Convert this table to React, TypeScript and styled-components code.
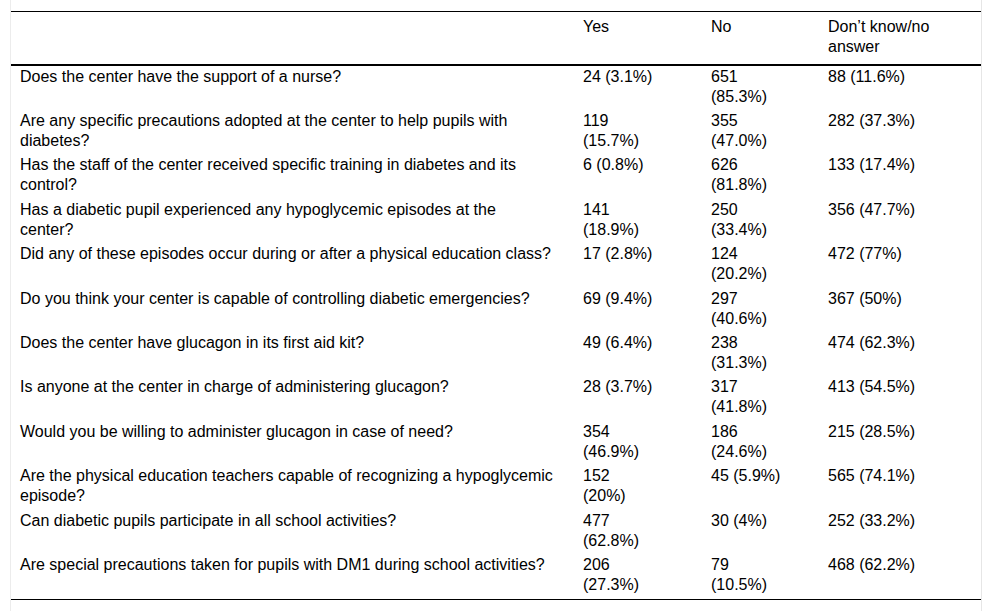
import styled, { createGlobalStyle } from 'styled-components'

const GlobalStyle = createGlobalStyle`
  html, body {
    margin: 0;
    padding: 0;
    background: #fff;
  }
  body {
    font-family: "Liberation Sans", Arial, sans-serif;
    color: #000;
  }
`

const S = {
  Frame: styled.div`
    margin: 0 10px;
    padding-top: 11px;
    border-left: 1px solid #ececec;
    border-right: 1px solid #e6e6e6;
    min-height: 611px;
    box-sizing: border-box;
  `,
  Table: styled.table`
    width: 100%;
    border-collapse: collapse;
    table-layout: fixed;
    font-size: 16px;
    line-height: 20px;
    border-top: 1px solid #000;
    border-bottom: 1px solid #000;
  `,
  HeadRow: styled.tr`
    border-bottom: 2px solid #000;
  `,
  HeadCell: styled.th`
    font-weight: normal;
    text-align: left;
    vertical-align: top;
    white-space: pre;
    overflow: hidden;
    padding: 5px 0 7px 9px;
  `,
  Cell: styled.td`
    text-align: left;
    vertical-align: top;
    white-space: pre;
    overflow: hidden;
    padding: 0.6px 0 3.8px 9px;
  `,
}

type Row = [string, string, string, string]

// line breaks follow the wrapping of the original table
const rows: Row[] = [
  ['Does the center have the support of a nurse?', '24 (3.1%)', '651\n(85.3%)', '88 (11.6%)'],
  ['Are any specific precautions adopted at the center to help pupils with\ndiabetes?', '119\n(15.7%)', '355\n(47.0%)', '282 (37.3%)'],
  ['Has the staff of the center received specific training in diabetes and its\ncontrol?', '6 (0.8%)', '626\n(81.8%)', '133 (17.4%)'],
  ['Has a diabetic pupil experienced any hypoglycemic episodes at the\ncenter?', '141\n(18.9%)', '250\n(33.4%)', '356 (47.7%)'],
  ['Did any of these episodes occur during or after a physical education class?', '17 (2.8%)', '124\n(20.2%)', '472 (77%)'],
  ['Do you think your center is capable of controlling diabetic emergencies?', '69 (9.4%)', '297\n(40.6%)', '367 (50%)'],
  ['Does the center have glucagon in its first aid kit?', '49 (6.4%)', '238\n(31.3%)', '474 (62.3%)'],
  ['Is anyone at the center in charge of administering glucagon?', '28 (3.7%)', '317\n(41.8%)', '413 (54.5%)'],
  ['Would you be willing to administer glucagon in case of need?', '354\n(46.9%)', '186\n(24.6%)', '215 (28.5%)'],
  ['Are the physical education teachers capable of recognizing a hypoglycemic\nepisode?', '152\n(20%)', '45 (5.9%)', '565 (74.1%)'],
  ['Can diabetic pupils participate in all school activities?', '477\n(62.8%)', '30 (4%)', '252 (33.2%)'],
  ['Are special precautions taken for pupils with DM1 during school activities?', '206\n(27.3%)', '79\n(10.5%)', '468 (62.2%)'],
]

const colWidths = [563, 128, 117, 162]

const headers = ['', 'Yes', 'No', 'Don’t know/no\nanswer']

export default function App() {
  return (
    <>
      <GlobalStyle />
      <S.Frame>
        <S.Table>
          <colgroup>
            {colWidths.map((w, i) => (
              <col key={i} style={{ width: w }} />
            ))}
          </colgroup>
          <thead>
            <S.HeadRow>
              {headers.map((h, i) => (
                <S.HeadCell key={i}>{h}</S.HeadCell>
              ))}
            </S.HeadRow>
          </thead>
          <tbody>
            {rows.map((r, ri) => (
              <tr key={ri}>
                {r.map((v, ci) => (
                  <S.Cell key={ci}>{v}</S.Cell>
                ))}
              </tr>
            ))}
          </tbody>
        </S.Table>
      </S.Frame>
    </>
  )
}
